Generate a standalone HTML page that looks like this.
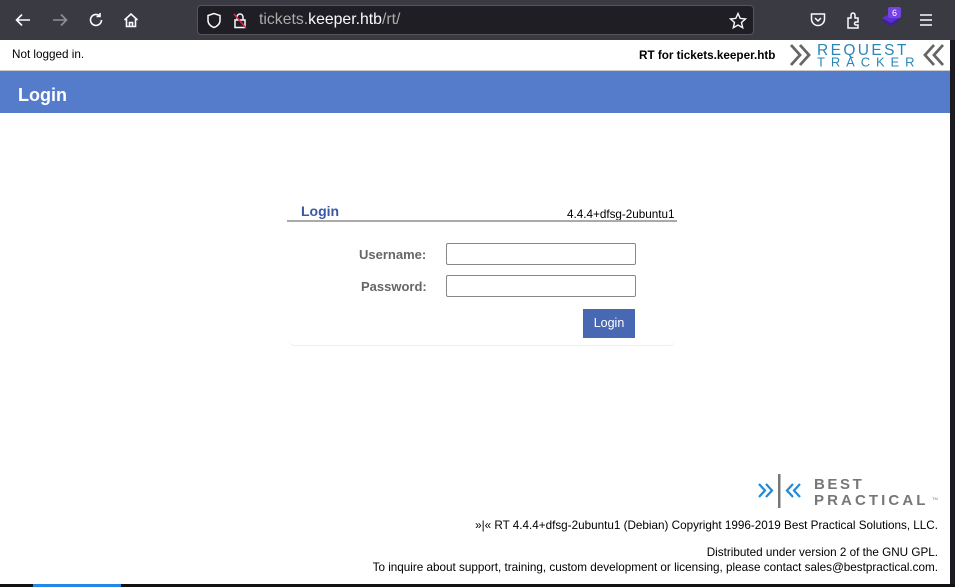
<!DOCTYPE html>
<html><head><style>
*{margin:0;padding:0;box-sizing:border-box}
body{width:955px;height:587px;overflow:hidden;background:#1c1b22;font-family:"Liberation Sans",sans-serif;position:relative}
.chrome{position:absolute;left:0;top:0;width:955px;height:40px;background:#3a3b42}
.url{position:absolute;left:197px;top:5px;width:557px;height:30px;background:#1f1e25;border:1px solid #55555c;border-radius:4px}
.url span{position:absolute;left:61px;top:5px;font-size:15.8px;color:#aaa}
.url b{font-weight:normal;color:#fbfbfe}
.page{position:absolute;left:0;top:40px;width:950px;height:544px;background:#fff}
.ic{position:absolute;color:#fbfbfe}
.ft{font-size:11.7px}
</style></head><body>
<div class="chrome">
<svg class="ic" style="left:14px;top:11px" width="18" height="18" viewBox="0 0 18 18" fill="none" stroke="#fbfbfe" stroke-width="1.6"><path d="M16 9H3M8 3.5 2.5 9 8 14.5"/></svg>
<svg class="ic" style="left:51px;top:11px" width="18" height="18" viewBox="0 0 18 18" fill="none" stroke="#8f8f95" stroke-width="1.6"><path d="M2 9h13M10 3.5 15.5 9 10 14.5"/></svg>
<svg class="ic" style="left:87px;top:11px" width="18" height="18" viewBox="0 0 18 18" fill="none" stroke="#fbfbfe" stroke-width="1.6"><path d="M14.5 9a5.5 5.5 0 1 1-2-4.3M13 2v3.5H9.5"/></svg>
<svg class="ic" style="left:122px;top:11px" width="18" height="18" viewBox="0 0 18 18" fill="none" stroke="#fbfbfe" stroke-width="1.6"><path d="M2.5 9 9 3l6.5 6M4.5 8v7.5h9V8M7.5 15.5v-4h3v4"/></svg>
<div class="url">
<svg style="position:absolute;left:8px;top:6px" width="16" height="17" viewBox="0 0 16 17" fill="none" stroke="#fbfbfe" stroke-width="1.5"><path d="M8 1.5 2 3.5v5c0 3.5 3 6 6 7 3-1 6-3.5 6-7v-5z"/></svg>
<svg style="position:absolute;left:35px;top:6px" width="14" height="17" viewBox="0 0 14 17" fill="none" stroke="#fbfbfe" stroke-width="1.5"><rect x="2" y="8" width="10" height="7.5"/><path d="M4 8V5a3 3 0 0 1 6 0v3"/><path d="M1 2 13 16" stroke="#e22850"/></svg>
<span>tickets.<b>keeper.htb</b>/rt/</span>
<svg style="position:absolute;left:531px;top:6px" width="18" height="18" viewBox="0 0 18 18" fill="none" stroke="#fbfbfe" stroke-width="1.4"><path d="M9 1.5l2.2 4.9 5.3.5-4 3.6 1.2 5.2L9 13l-4.7 2.7 1.2-5.2-4-3.6 5.3-.5z"/></svg>
</div>
<svg class="ic" style="left:809px;top:11px" width="18" height="18" viewBox="0 0 18 18" fill="none" stroke="#fbfbfe" stroke-width="1.5"><path d="M2.5 3h13v5a6.5 6.5 0 0 1-13 0z"/><path d="M6 7l3 3 3-3"/></svg>
<svg class="ic" style="left:845px;top:10px" width="18" height="20" viewBox="0 0 18 20" fill="none" stroke="#fbfbfe" stroke-width="1.5"><path d="M3 8h3V5a2 2 0 0 1 4 0v3h3v4h-2a1.5 1.5 0 0 0 0 3h2v3H3z"/></svg>
<svg class="ic" style="left:879px;top:6px" width="24" height="24" viewBox="0 0 24 24"><path d="M3 15l9-5 8 5-8 5z" fill="#3d1fa0"/><path d="M3 12l9-5 8 5-8 5z" fill="#5b2fd6"/><rect x="9" y="1" width="13" height="11" rx="2" fill="#7542e5"/><text x="15.5" y="10" font-size="9" fill="#fff" text-anchor="middle" font-family="Liberation Sans">6</text></svg>
<svg class="ic" style="left:918px;top:12px" width="16" height="16" viewBox="0 0 16 16" stroke="#fbfbfe" stroke-width="1.5"><path d="M2 3h12M2 8h12M2 13h12"/></svg>
</div>
<div style="position:absolute;left:0;top:584px;width:955px;height:3px;background:#111"></div>
<div style="position:absolute;left:33px;top:584px;width:88px;height:3px;background:#1f8ae8"></div>
<div class="page">
<div class="ft" style="position:absolute;left:12px;top:8px;color:#000">Not logged in.</div>
<div class="ft" style="position:absolute;left:639px;top:9px;font-weight:bold;color:#000">RT for tickets.keeper.htb</div>
<svg style="position:absolute;left:788px;top:2px" width="162" height="26" viewBox="0 0 162 26">
<path d="M3 3l9 10-9 10M12 3l9 10-9 10" fill="none" stroke="#666" stroke-width="2.8"/>
<text x="29" y="13" font-size="15.5" fill="#2a86b8" letter-spacing="2.4" font-family="Liberation Sans">REQUEST</text>
<text x="29" y="24.5" font-size="13" fill="#2a86b8" letter-spacing="5.9" font-family="Liberation Sans">TRACKER</text>
<path d="M146 3l-9 10 9 10M155 3l-9 10 9 10" fill="none" stroke="#666" stroke-width="2.8"/>
</svg>
<div style="position:absolute;left:0;top:30px;width:950px;height:1px;background:#ccc"></div>
<div style="position:absolute;left:0;top:31px;width:950px;height:42px;background:#547ccb"></div>
<div style="position:absolute;left:18px;top:45px;font-size:18px;font-weight:bold;color:#fff">Login</div>

<div style="position:absolute;left:301px;top:163px;font-size:14px;font-weight:bold;color:#3858a5">Login</div>
<div class="ft" style="position:absolute;left:567px;top:168px;color:#000">4.4.4+dfsg-2ubuntu1</div>
<div style="position:absolute;left:287px;top:180px;width:390px;height:2px;background:#aaa"></div>
<div style="position:absolute;left:289px;top:182px;width:386px;height:124px;border-bottom:1px solid #eee;border-radius:0 0 6px 6px"></div>
<div style="position:absolute;left:359px;top:207px;font-size:13px;font-weight:bold;color:#666">Username:</div>
<div style="position:absolute;left:361px;top:239px;font-size:13px;font-weight:bold;color:#666">Password:</div>
<div style="position:absolute;left:446px;top:203px;width:190px;height:22px;border:1px solid #888;border-radius:2px"></div>
<div style="position:absolute;left:446px;top:235px;width:190px;height:22px;border:1px solid #888;border-radius:2px"></div>
<div style="position:absolute;left:583px;top:269px;width:52px;height:29px;background:#4868b3;color:#fff;font-size:12.5px;text-align:center;line-height:29px">Login</div>

<svg style="position:absolute;left:756px;top:433px" width="185" height="36" viewBox="0 0 185 36">
<path d="M3 11l6 6.5-6 6.5M10 11l6 6.5-6 6.5" fill="none" stroke="#1f8ad8" stroke-width="2.2"/>
<rect x="22" y="1" width="2.5" height="34" fill="#777"/>
<path d="M37 11l-6 6.5 6 6.5M44 11l-6 6.5 6 6.5" fill="none" stroke="#1f8ad8" stroke-width="2.2"/>
<text x="58" y="16" font-size="15" font-weight="bold" fill="#777" letter-spacing="2.6" font-family="Liberation Sans">BEST</text>
<text x="58" y="32" font-size="15" font-weight="bold" fill="#777" letter-spacing="3.1" font-family="Liberation Sans">PRACTICAL</text>
<text x="176" y="27" font-size="4" fill="#777">TM</text>
</svg>
<div class="ft" style="position:absolute;right:12px;top:479px;color:#000">»|« RT 4.4.4+dfsg-2ubuntu1 (Debian) Copyright 1996-2019 Best Practical Solutions, LLC.</div>
<div class="ft" style="position:absolute;right:12px;top:505px;color:#000;text-align:right;line-height:15px">Distributed under version 2 of the GNU GPL.<br>To inquire about support, training, custom development or licensing, please contact sales@bestpractical.com.</div>
</div>
</body></html>
